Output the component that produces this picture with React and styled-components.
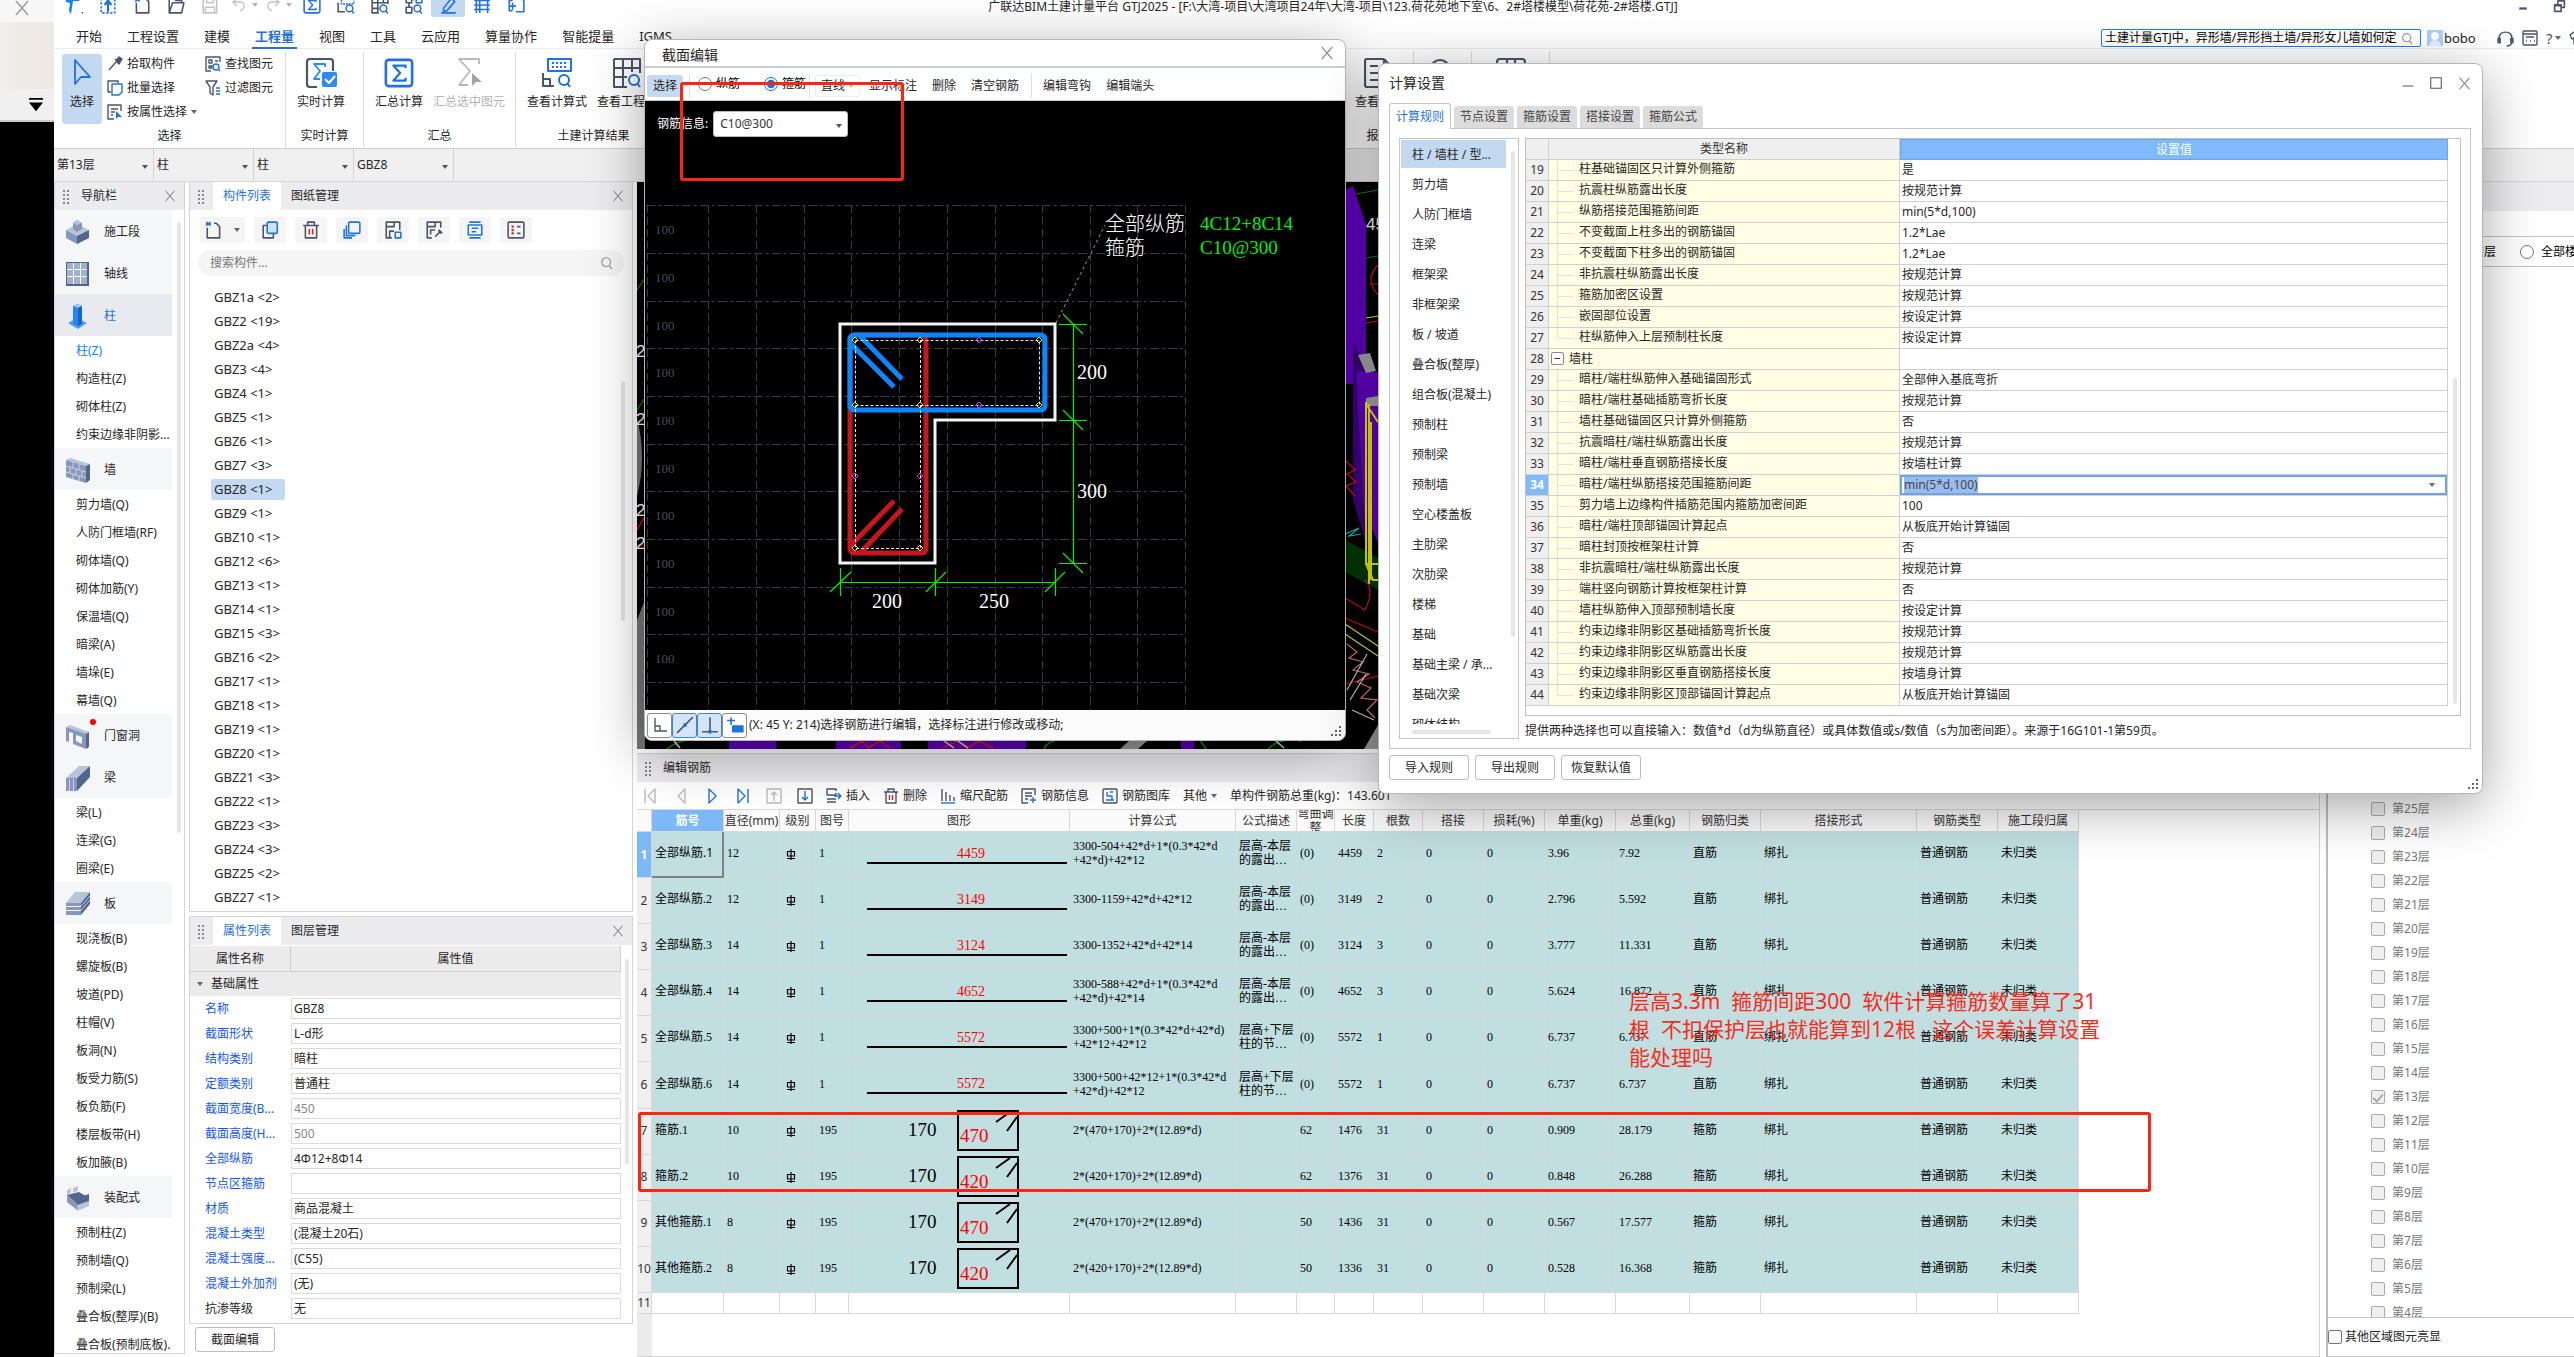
import React from 'react'
import styled, { createGlobalStyle, css } from 'styled-components'

const navGroups = [
  { name: '施工段', icon: 'stage', items: [] },
  { name: '轴线', icon: 'axis', items: [] },
  { name: '柱', icon: 'column', active: true, items: ['柱(Z)', '构造柱(Z)', '砌体柱(Z)', '约束边缘非阴影...'] },
  {
    name: '墙',
    icon: 'wall',
    items: ['剪力墙(Q)', '人防门框墙(RF)', '砌体墙(Q)', '砌体加筋(Y)', '保温墙(Q)', '暗梁(A)', '墙垛(E)', '幕墙(Q)'],
  },
  { name: '门窗洞', icon: 'door', dot: true, items: [] },
  { name: '梁', icon: 'beam', items: ['梁(L)', '连梁(G)', '圈梁(E)'] },
  {
    name: '板',
    icon: 'slab',
    items: ['现浇板(B)', '螺旋板(B)', '坡道(PD)', '柱帽(V)', '板洞(N)', '板受力筋(S)', '板负筋(F)', '楼层板带(H)', '板加腋(B)'],
  },
  { name: '装配式', icon: 'prefab', items: ['预制柱(Z)', '预制墙(Q)', '预制梁(L)', '叠合板(整厚)(B)', '叠合板(预制底板).'] },
]

const components = [
  'GBZ1a <2>', 'GBZ2 <19>', 'GBZ2a <4>', 'GBZ3 <4>', 'GBZ4 <1>', 'GBZ5 <1>', 'GBZ6 <1>', 'GBZ7 <3>', 'GBZ8 <1>',
  'GBZ9 <1>', 'GBZ10 <1>', 'GBZ12 <6>', 'GBZ13 <1>', 'GBZ14 <1>', 'GBZ15 <3>', 'GBZ16 <2>', 'GBZ17 <1>',
  'GBZ18 <1>', 'GBZ19 <1>', 'GBZ20 <1>', 'GBZ21 <3>', 'GBZ22 <1>', 'GBZ23 <3>', 'GBZ24 <3>', 'GBZ25 <2>', 'GBZ27 <1>',
]

const properties = [
  ['名称', 'GBZ8'],
  ['截面形状', 'L-d形'],
  ['结构类别', '暗柱'],
  ['定额类别', '普通柱'],
  ['截面宽度(B...', '450', 'dim'],
  ['截面高度(H...', '500', 'dim'],
  ['全部纵筋', '4Φ12+8Φ14'],
  ['节点区箍筋', ''],
  ['材质', '商品混凝土'],
  ['混凝土类型', '(混凝土20石)'],
  ['混凝土强度...', '(C55)'],
  ['混凝土外加剂', '(无)'],
  ['抗渗等级', '无', 'plain'],
]

const ruleTypes = [
  '柱 / 墙柱 / 型...', '剪力墙', '人防门框墙', '连梁', '框架梁', '非框架梁', '板 / 坡道', '叠合板(整厚)', '组合板(混凝土)',
  '预制柱', '预制梁', '预制墙', '空心楼盖板', '主肋梁', '次肋梁', '楼梯', '基础', '基础主梁 / 承...', '基础次梁', '砌体结构',
]

const rules = [
  [19, '柱基础锚固区只计算外侧箍筋', '是'],
  [20, '抗震柱纵筋露出长度', '按规范计算'],
  [21, '纵筋搭接范围箍筋间距', 'min(5*d,100)'],
  [22, '不变截面上柱多出的钢筋锚固', '1.2*Lae'],
  [23, '不变截面下柱多出的钢筋锚固', '1.2*Lae'],
  [24, '非抗震柱纵筋露出长度', '按规范计算'],
  [25, '箍筋加密区设置', '按规范计算'],
  [26, '嵌固部位设置', '按设定计算'],
  [27, '柱纵筋伸入上层预制柱长度', '按设定计算'],
  [28, '墙柱', ''],
  [29, '暗柱/端柱纵筋伸入基础锚固形式', '全部伸入基底弯折'],
  [30, '暗柱/端柱基础插筋弯折长度', '按规范计算'],
  [31, '墙柱基础锚固区只计算外侧箍筋', '否'],
  [32, '抗震暗柱/端柱纵筋露出长度', '按规范计算'],
  [33, '暗柱/端柱垂直钢筋搭接长度', '按墙柱计算'],
  [34, '暗柱/端柱纵筋搭接范围箍筋间距', 'min(5*d,100)'],
  [35, '剪力墙上边缘构件插筋范围内箍筋加密间距', '100'],
  [36, '暗柱/端柱顶部锚固计算起点', '从板底开始计算锚固'],
  [37, '暗柱封顶按框架柱计算', '否'],
  [38, '非抗震暗柱/端柱纵筋露出长度', '按规范计算'],
  [39, '端柱竖向钢筋计算按框架柱计算', '否'],
  [40, '墙柱纵筋伸入顶部预制墙长度', '按设定计算'],
  [41, '约束边缘非阴影区基础插筋弯折长度', '按规范计算'],
  [42, '约束边缘非阴影区纵筋露出长度', '按规范计算'],
  [43, '约束边缘非阴影区垂直钢筋搭接长度', '按墙身计算'],
  [44, '约束边缘非阴影区顶部锚固计算起点', '从板底开始计算锚固'],
]

const rebarColumns = [
  ['筋号', 72], ['直径(mm)', 56], ['级别', 36], ['图号', 33], ['图形', 221], ['计算公式', 166], ['公式描述', 61],
  ['弯曲调整', 38], ['长度', 39], ['根数', 49], ['搭接', 61], ['损耗(%)', 61], ['单重(kg)', 71], ['总重(kg)', 74],
  ['钢筋归类', 71], ['搭接形式', 156], ['钢筋类型', 81], ['施工段归属', 81],
]

// name, diameter, figure no., formula, description, bend, length, count, unit weight, total weight, hoop height
const rebars = [
  ['全部纵筋.1', 12, 1, '3300-504+42*d+1*(0.3*42*d\n+42*d)+42*12', '层高-本层\n的露出…', '(0)', 4459, 2, '3.96', '7.92'],
  ['全部纵筋.2', 12, 1, '3300-1159+42*d+42*12', '层高-本层\n的露出…', '(0)', 3149, 2, '2.796', '5.592'],
  ['全部纵筋.3', 14, 1, '3300-1352+42*d+42*14', '层高-本层\n的露出…', '(0)', 3124, 3, '3.777', '11.331'],
  ['全部纵筋.4', 14, 1, '3300-588+42*d+1*(0.3*42*d\n+42*d)+42*14', '层高-本层\n的露出…', '(0)', 4652, 3, '5.624', '16.872'],
  ['全部纵筋.5', 14, 1, '3300+500+1*(0.3*42*d+42*d)\n+42*12+42*12', '层高+下层\n柱的节…', '(0)', 5572, 1, '6.737', '6.737'],
  ['全部纵筋.6', 14, 1, '3300+500+42*12+1*(0.3*42*d\n+42*d)+42*12', '层高+下层\n柱的节…', '(0)', 5572, 1, '6.737', '6.737'],
  ['箍筋.1', 10, 195, '2*(470+170)+2*(12.89*d)', '', '62', 1476, 31, '0.909', '28.179', 470],
  ['箍筋.2', 10, 195, '2*(420+170)+2*(12.89*d)', '', '62', 1376, 31, '0.848', '26.288', 420],
  ['其他箍筋.1', 8, 195, '2*(470+170)+2*(12.89*d)', '', '50', 1436, 31, '0.567', '17.577', 470],
  ['其他箍筋.2', 8, 195, '2*(420+170)+2*(12.89*d)', '', '50', 1336, 31, '0.528', '16.368', 420],
]

const floors = Array.from({ length: 22 }, (_, i) => 25 - i)

const BLUE = '#1f72e0'
const INK = '#4d5468'

/* ---------- icons ---------- */

const Ico = ({ size = 16, h, box, color = INK, sw = 1.4, children }) => (
  <svg
    width={size}
    height={h || size}
    viewBox={box || '0 0 16 16'}
    fill='none'
    stroke={color}
    strokeWidth={sw}
    strokeLinejoin='round'
    aria-hidden='true'
  >
    {children}
  </svg>
)

const Sigma = ({ size = 16, color = BLUE }) => (
  <Ico size={size} color={color}>
    <rect x='1' y='1' width='14' height='14' rx='1.5' />
    <path d='M11.5 5.5V4H5l3.6 4L5 12h6.5v-1.5' strokeWidth='1.2' />
  </Ico>
)

const Lens = ({ color = '#999', size = 14 }) => (
  <Ico size={size} color={color}>
    <circle cx='7' cy='7' r='5' />
    <path d='M10.5 11l3 4' />
  </Ico>
)

const Close = ({ size = 12, color = '#888' }) => (
  <Ico size={size} color={color}>
    <path d='M2 1l12 14M14 1L2 15' />
  </Ico>
)

const SizeGrip = () => (
  <GripCorner>
    <Ico size={10} box='0 0 10 10' color='none'>
      <path d='M8 0h2v2H8zM8 4h2v2H8zM4 4h2v2H4zM8 8h2v2H8zM4 8h2v2H4zM0 8h2v2H0z' fill='#666' />
    </Ico>
  </GripCorner>
)

const quickIcons = {
  logo: (
    <Ico size={20} box='0 0 20 20' color='none'>
      <path d='M1 2h17l-3 4H9l-2 13-2-3 1-8-4-1z' fill='#1683f0' />
      <path d='M17 17h2v2z' fill='#555' />
    </Ico>
  ),
  upload: (
    <Ico size={18} color={BLUE}>
      <rect x='2' y='1' width='12' height='14' strokeDasharray='2 1.5' />
      <path d='M8 14V5M5 8l3-4 3 4' strokeWidth='2' />
    </Ico>
  ),
  fresh: (
    <Ico size={18}>
      <path d='M3 6v9h11V5l-3-3H8' />
      <path d='M2 1l4 4M6 1L2 5' stroke={BLUE} />
    </Ico>
  ),
  open: (
    <Ico size={18}>
      <path d='M2 15V2h4l2 2h5v2M2 15l3-9h10l-2 9z' />
    </Ico>
  ),
  save: (
    <Ico size={18} color='#c4c4c4'>
      <path d='M2 2h10l2 2v11H2zM5 2v4h6V2M4 15v-5h8v5' />
    </Ico>
  ),
  undo: (
    <Ico size={16} color='#c4c4c4'>
      <path d='M6 2L2 5l4 4M2 5h7c6 0 5 7 0 9' />
    </Ico>
  ),
  redo: (
    <Ico size={16} color='#c4c4c4'>
      <path d='M10 2l4 3-4 4M14 5H7C1 5 2 12 7 14' />
    </Ico>
  ),
  look: (
    <Ico size={18}>
      <rect x='4' y='1' width='11' height='6' stroke={BLUE} strokeDasharray='1.5 1' />
      <path d='M1 6v4M1 9v5h6' />
      <circle cx='11' cy='11' r='3' stroke={BLUE} />
      <path d='M13 13l2 2.5' stroke={BLUE} />
    </Ico>
  ),
  grid: (
    <Ico size={18}>
      <path d='M1 1h14v6M1 1v14h6M1 6h14M1 11h6M6 1v14M11 1v5' />
      <circle cx='11' cy='11' r='3' stroke={BLUE} />
      <path d='M13 13l2 2.5' stroke={BLUE} />
    </Ico>
  ),
  report: (
    <Ico size={18}>
      <path d='M1 1h5v5H1zM1 10h5v5H1zM6 3h3M3.5 6v4' />
      <path d='M10 1h5v5h-5z' stroke={BLUE} />
      <circle cx='11' cy='11' r='3' stroke={BLUE} />
      <path d='M13 13l2 2.5' stroke={BLUE} />
    </Ico>
  ),
  pen: (
    <Ico size={18} color={BLUE}>
      <path d='M4 11L11 2l3 3-7 8-3 .5zM2 15h13' />
    </Ico>
  ),
  rails: (
    <Ico size={18} color={BLUE}>
      <path d='M3 1v14M13 1v14M1 4h14M1 8h14M1 12h14M6 1v14' />
    </Ico>
  ),
  sheet: (
    <Ico size={18} color={BLUE}>
      <path d='M5 4H2v9h3M8 1h4l3 3v10H8M8 9H2M5 6v6' />
    </Ico>
  ),
}

const ribbonIcons = {
  arrow: (
    <Ico size={30} box='0 0 30 30' color={BLUE} sw={1.8}>
      <path d='M8 2v24l6-7h9z' />
    </Ico>
  ),
  live: (
    <Ico size={34} h={30} box='0 0 34 30' sw={2.2}>
      <path d='M13 29H6q-3 0-3-3V4q0-3 3-3h20q3 0 3 3v9' />
      <path d='M21 9V6h-11l6 7-6 8h6' stroke='#2b8af7' strokeWidth='1.8' />
      <rect x='18' y='14' width='15' height='15' rx='2' fill='#2b8af7' stroke='none' />
      <path d='M21 21l4 4 6-7' stroke='#fff' />
    </Ico>
  ),
  sum: <Sigma size={30} />,
  sumPick: (
    <Ico size={30} box='0 0 30 30' color='#b9b9b9' sw={1.8}>
      <path d='M25 6V1H5l11 12L5 27h9' />
      <path d='M18 15v13l4-4h6z' fill='#a4a4a4' stroke='none' />
    </Ico>
  ),
  formula: (
    <Ico size={30} box='0 0 30 30' color={BLUE} sw={2}>
      <path d='M6 1h23v12H6z' />
      <path d='M10 5h2M14 5h2M18 5h2M22 5h2M10 9h2M14 9h2M18 9h2M22 9h2' />
      <path d='M1 15v13h11M1 21h7v7' stroke={INK} />
      <circle cx='22' cy='22' r='5' />
      <path d='M25 25l3 4' />
    </Ico>
  ),
  qty: (
    <Ico size={30} box='0 0 30 30' sw={2}>
      <path d='M2 1h26v14M2 1v28h13M2 10h26M2 19h13M11 1v28M20 1v13' />
      <circle cx='22' cy='22' r='5' stroke={BLUE} />
      <path d='M25 25l3 4' stroke={BLUE} />
    </Ico>
  ),
  report: (
    <Ico size={30} box='0 0 30 30' sw={2.2}>
      <path d='M20 1H3q-2 0-2 2v24q0 2 2 2h20M20 1l8 9v10M20 1v9h8M6 8h8M6 15h12M6 22h8' />
    </Ico>
  ),
  ring: (
    <Ico size={30} box='0 0 30 30' sw={2.2}>
      <circle cx='15' cy='11' r='9' />
    </Ico>
  ),
  table: (
    <Ico size={30} box='0 0 30 30' sw={2.2}>
      <rect x='1' y='1' width='28' height='28' rx='3' />
      <path d='M11 1v28M19 1v28' />
    </Ico>
  ),
}

const smallIcons = {
  pick: (
    <Ico>
      <path d='M2 14l7-8' />
      <path d='M8 3l5 5M9 5l3-4 3 2-3 5z' fill={INK} />
    </Ico>
  ),
  batch: (
    <Ico>
      <path d='M11 3V1H1v11h3' />
      <path d='M5 4h10v8l-3 3H5z' stroke={BLUE} />
    </Ico>
  ),
  byProp: (
    <Ico>
      <path d='M14 7V1H1v14h6M4 5h7M4 8h4M4 11h2' />
      <path d='M9 7v8l2-2h4z' fill={BLUE} stroke='none' />
    </Ico>
  ),
  find: (
    <Ico>
      <path d='M15 6V1H1v14h5M4 4h3v3H4zM10 5h3M4 10h3v2H4z' />
      <circle cx='11' cy='11' r='3' stroke={BLUE} />
      <path d='M13 13l2 2' stroke={BLUE} />
    </Ico>
  ),
  filter: (
    <Ico>
      <path d='M1 1h11L8 7v8l-3-2V7z' />
      <path d='M11 8h4M11 11h4M11 14h4' stroke={BLUE} />
    </Ico>
  ),
}

const listTools = [
  <Ico key='a' size={18}>
    <path d='M2 6v9h11V5l-3-3H8' />
    <path d='M1 1l4 3M5 1L1 4M1 2.5h4' stroke={BLUE} />
  </Ico>,
  <Ico key='b' size={18} color={BLUE}>
    <path d='M11 11v4H2V4h3' stroke={INK} />
    <rect x='5.5' y='1' width='9' height='10' rx='1' fill='#cfe2fb' />
  </Ico>,
  <Ico key='c' size={18}>
    <path d='M1 4h14M5 4V1h6v3M3 4v11h10V4' />
    <path d='M6.5 7v5M9.5 7v5' stroke='#d8232a' />
  </Ico>,
  <Ico key='d' size={18} color={BLUE}>
    <rect x='5' y='1' width='10' height='10' rx='1' />
    <path d='M3 4v9h8M1 7v8h7' />
  </Ico>,
  <Ico key='e' size={18}>
    <path d='M14 8V1H2v14h5M2 5h7V1M5 15V9h4' />
    <rect x='10' y='10' width='5' height='5' stroke={BLUE} />
  </Ico>,
  <Ico key='f' size={18}>
    <path d='M14 6V1H2v14h4M2 5h7V1M5 12V8h4M9 14l5-5' />
    <path d='M12 8l3 3' strokeWidth='2' />
  </Ico>,
  <Ico key='g' size={18} color={BLUE}>
    <path d='M3 1h10M3 15h10' />
    <rect x='2' y='3.5' width='12' height='9' />
    <path d='M5 6.5h6M5 9.5h4' />
  </Ico>,
  <Ico key='h' size={18}>
    <rect x='1' y='1' width='14' height='14' rx='1' />
    <path d='M4 5h2M4 8h2M4 11h2' stroke='#e0222a' strokeWidth='2' />
    <path d='M9 5h3M9 11h3' />
  </Ico>,
]

const LIGHT = '#b9c4d9'
const MID = '#8796bb'
const DARK = '#526590'

const navIcons = {
  stage: (
    <>
      <path d='M1 11l11-6 12 6-12 6z' fill={LIGHT} />
      <path d='M1 11l11 6v8L1 19z' fill={MID} />
      <path d='M24 11l-12 6v8l12-6z' fill={DARK} />
      <path d='M8 4l4-3 5 3v6l-5 3-4-3z' fill={MID} />
      <path d='M8 4l4-3 5 3-5 2z' fill={LIGHT} />
    </>
  ),
  axis: (
    <>
      <rect x='1' y='1' width='23' height='24' fill={DARK} />
      <path d='M2 2h20v21H2z' fill='#fff' />
      <path d='M2 2h6v6H2zM9 2h6v6H9zM16 2h6v6h-6zM2 9h6v6H2zM9 9h6v6H9zM16 9h6v6h-6zM2 16h6v7H2zM9 16h6v7H9zM16 16h6v7h-6z' fill='#a3b0cb' />
    </>
  ),
  column: (
    <>
      <path d='M3 20l9-5 10 5-9 6z' fill='#4f9bf0' />
      <path d='M8 3l5-2 4 2v18l-4 2-5-2z' fill='#2b84ee' />
      <path d='M8 3l5-2 4 2-4 2z' fill='#9cc8fa' />
      <path d='M13 5l4-2v18l-4 2z' fill='#1266cc' />
    </>
  ),
  wall: (
    <>
      <path d='M1 3l4-2 20 6-4 2z' fill={LIGHT} />
      <path d='M21 9l4-2v16l-4 3z' fill={DARK} />
      <path d='M1 3l20 6v17L1 20z' fill={MID} />
      <path d='M1 9l20 6M1 15l20 6M8 5v6M14 7v6M5 10v6M11 12v6M17 14v6M8 17v5M14 19v5' stroke='#c9d2e4' strokeWidth='1' />
    </>
  ),
  door: (
    <>
      <path d='M1 4l4-2 19 7-3 2z' fill={LIGHT} />
      <path d='M21 11l3-2v15l-3 2z' fill={DARK} />
      <path fillRule='evenodd' d='M1 4l20 7v15L8 21V10l-4-1v10l-3-1zM11 12v6l6 3v-7z' fill={MID} />
    </>
  ),
  beam: (
    <>
      <path d='M1 13L14 1h11L12 13z' fill={LIGHT} />
      <path d='M12 13L25 1v11L12 26z' fill={DARK} />
      <path d='M1 13h11v13H1z' fill={MID} />
      <path d='M4.5 14v12M8.5 14v12' stroke='#c9d2e4' strokeWidth='1' />
    </>
  ),
  slab: (
    <>
      <path d='M1 12L10 1h15L16 12z' fill={LIGHT} />
      <path d='M16 12l9-11v12l-9 11z' fill={DARK} />
      <path d='M1 12h15v3H1zM1 16h15v3H1zM1 20h15v4H1z' fill={MID} />
      <path d='M16 15.5L25 5M16 19.5L25 9' stroke='#c9d2e4' strokeWidth='1' />
    </>
  ),
  prefab: (
    <>
      <path d='M2 5l4-2v5L2 10zM8 3l5-2v5L8 8z' fill={LIGHT} />
      <path d='M2 10l12-3 10 6-12 6z' fill={DARK} />
      <path d='M2 10l10 9v6L2 17z' fill={MID} />
      <path d='M12 19l12-3v5l-12 5z' fill={LIGHT} />
      <path d='M12 13l12-4v7l-12 4z' fill={DARK} />
    </>
  ),
}

const Grade = () => (
  <Ico size={10} h={11} box='0 0 10 11' color='#000' sw={1.2}>
    <path d='M1.5 2.5h7v4.5h-7zM5 0v11M1 9.5h8' />
  </Ico>
)

/* ---------- ribbon ---------- */

function Header() {
  return (
    <header>
      <TitleBar>
        <QuickTools>
          <QuickButton aria-label='广联达'>{quickIcons.logo}</QuickButton>
          <QuickButton aria-label='上传'>{quickIcons.upload}</QuickButton>
          <QuickButton aria-label='新建'>{quickIcons.fresh}</QuickButton>
          <QuickButton aria-label='打开'>{quickIcons.open}</QuickButton>
          <QuickButton aria-label='保存'>{quickIcons.save}</QuickButton>
          <QuickButton aria-label='撤销'>{quickIcons.undo}<Caret $light /></QuickButton>
          <QuickButton aria-label='恢复'>{quickIcons.redo}<Caret $light /></QuickButton>
          <QuickButton aria-label='汇总计算'><Sigma size={18} /></QuickButton>
          <QuickButton aria-label='查看计算式'>{quickIcons.look}</QuickButton>
          <QuickButton aria-label='查看工程量'>{quickIcons.grid}</QuickButton>
          <QuickButton aria-label='查看报表'>{quickIcons.report}</QuickButton>
          <QuickButton aria-label='编辑钢筋' $active>{quickIcons.pen}</QuickButton>
          <QuickButton aria-label='钢筋三维'>{quickIcons.rails}</QuickButton>
          <QuickButton aria-label='导入'>{quickIcons.sheet}</QuickButton>
          <QuickMore aria-label='更多'><Caret /></QuickMore>
        </QuickTools>
        <Title>广联达BIM土建计量平台 GTJ2025 - [F:\大湾-项目\大湾项目24年\大湾-项目\123.荷花苑地下室\6、2#塔楼模型\荷花苑-2#塔楼.GTJ]</Title>
        <WindowTools>
          <IconButton aria-label='最小化'>
            <Ico size={12}><path d='M3 10h10' strokeWidth='3' /></Ico>
          </IconButton>
          <IconButton aria-label='还原'>
            <Ico size={13}><path d='M6 5V1h8v8h-3M2 6h8v8H2zM2 7h8' strokeWidth='2' /></Ico>
          </IconButton>
        </WindowTools>
      </TitleBar>
      <TabBar>
        {['开始', '工程设置', '建模', '工程量', '视图', '工具', '云应用', '算量协作', '智能提量', 'IGMS'].map((tab) => (
          <MenuTab key={tab} $active={tab === '工程量'}>{tab}</MenuTab>
        ))}
        <Account>
          <HelpSearch>
            <input aria-label='搜索帮助' defaultValue='土建计量GTJ中，异形墙/异形挡土墙/异形女儿墙如何定' />
            <Lens size={13} />
          </HelpSearch>
          <Ico size={16} color='none'>
            <rect width='16' height='16' fill='#a9d1fb' />
            <circle cx='8' cy='6' r='4' fill='#fff' />
            <path d='M2 16q1-6 6-6t6 6z' fill='#e6f2ff' />
          </Ico>
          <User>bobo</User>
          <HelpTools>
            <Ico size={17}><path d='M2 11V8q0-6 6-6t6 6v3M1 8h2v4H1zM13 8h2v4h-2zM14 12q-1 3-5 3' /></Ico>
            <Ico size={16}><rect x='1' y='1' width='14' height='14' rx='1' /><path d='M1 4h14M4 7h8M4 11h1M8 11h1M12 11h1' /></Ico>
            <span>?<Caret /></span>
            <Ico size={16}><path d='M5 2L1 5l2 4 2-1v6h7V8l2 1 2-4-4-3z' /></Ico>
          </HelpTools>
        </Account>
      </TabBar>
      <Ribbon>
        <Group $w={232}>
          <GroupBody $tight>
            <BigButton $active $w={40}>{ribbonIcons.arrow}选择</BigButton>
            <SmallColumn $w={98}>
              <SmallButton>{smallIcons.pick}拾取构件</SmallButton>
              <SmallButton>{smallIcons.batch}批量选择</SmallButton>
              <SmallButton>{smallIcons.byProp}按属性选择<Caret /></SmallButton>
            </SmallColumn>
            <SmallColumn>
              <SmallButton>{smallIcons.find}查找图元</SmallButton>
              <SmallButton>{smallIcons.filter}过滤图元</SmallButton>
            </SmallColumn>
          </GroupBody>
          <GroupLabel>选择</GroupLabel>
        </Group>
        <Group $w={78}>
          <GroupBody><BigButton>{ribbonIcons.live}实时计算</BigButton></GroupBody>
          <GroupLabel>实时计算</GroupLabel>
        </Group>
        <Group $w={152}>
          <GroupBody>
            <BigButton>{ribbonIcons.sum}汇总计算</BigButton>
            <BigButton disabled>{ribbonIcons.sumPick}汇总选中图元</BigButton>
          </GroupBody>
          <GroupLabel>汇总</GroupLabel>
        </Group>
        <Group $w={156} $open>
          <GroupBody>
            <BigButton>{ribbonIcons.formula}查看计算式</BigButton>
            <BigButton>{ribbonIcons.qty}查看工程量</BigButton>
          </GroupBody>
          <GroupLabel>土建计算结果</GroupLabel>
        </Group>
        <Group $w={672} $open />
        <Group $w={70}>
          <GroupBody><BigButton>{ribbonIcons.report}查看报表</BigButton></GroupBody>
          <GroupLabel>报表</GroupLabel>
        </Group>
        <Group $w={58}><GroupBody><BigButton aria-label='指标'>{ribbonIcons.ring}</BigButton></GroupBody></Group>
        <Group $w={78}><GroupBody $center><BigButton aria-label='表格算量'>{ribbonIcons.table}</BigButton></GroupBody></Group>
      </Ribbon>
      <ContextBar>
        {['第13层', '柱', '柱', 'GBZ8'].map((value, i) => (
          <Combo key={i}>
            <select aria-label={['楼层', '构件类别', '构件类型', '构件'][i]} defaultValue={value}>
              <option>{value}</option>
            </select>
          </Combo>
        ))}
      </ContextBar>
    </header>
  )
}

/* ---------- side panels ---------- */

function NavPanel() {
  return (
    <NavBox>
      <PanelHeader>
        <Grip />
        <PanelName>导航栏</PanelName>
        <IconButton aria-label='关闭导航栏'><Close /></IconButton>
      </PanelHeader>
      <NavScroll>
        {navGroups.map((group) => (
          <div key={group.name}>
            <NavHead $active={group.active}>
              <Ico size={26} box='0 0 26 26' color='none'>{navIcons[group.icon]}</Ico>
              {group.name}
              {group.dot && <RedDot />}
            </NavHead>
            {group.items.map((item) => (
              <NavItem key={item} $active={item === '柱(Z)'}>{item}</NavItem>
            ))}
          </div>
        ))}
        <Thumb $top={12} $h={611} $right={3} />
      </NavScroll>
    </NavBox>
  )
}

function ComponentPanel() {
  return (
    <ListBox>
      <PanelHeader>
        <Grip />
        <PanelTab $active>构件列表</PanelTab>
        <PanelTab>图纸管理</PanelTab>
        <IconButton aria-label='关闭构件列表'><Close /></IconButton>
      </PanelHeader>
      <ListTools>
        {listTools.map((icon, i) => (
          <ToolButton key={i} $split={i === 0} aria-label={['新建', '复制', '删除', '层间复制', '存档', '提取', '排序', '显示'][i]}>
            {icon}
            {i === 0 && <Caret />}
          </ToolButton>
        ))}
      </ListTools>
      <SearchBox>
        <input aria-label='搜索构件' placeholder='搜索构件...' />
        <Lens />
      </SearchBox>
      <ComponentList>
        {components.map((name) => (
          <li key={name}>
            <ComponentItem $active={name === 'GBZ8 <1>'}>{name}</ComponentItem>
          </li>
        ))}
      </ComponentList>
      <Thumb $top={199} $h={240} $right={7} />
    </ListBox>
  )
}

function PropertyPanel() {
  return (
    <PropertyBox>
      <PanelHeader>
        <Grip />
        <PanelTab $active>属性列表</PanelTab>
        <PanelTab>图层管理</PanelTab>
        <IconButton aria-label='关闭属性列表'><Close /></IconButton>
      </PanelHeader>
      <PropertyHead>
        <span>属性名称</span>
        <span>属性值</span>
      </PropertyHead>
      <PropertySection><Caret />基础属性</PropertySection>
      <PropertyRows>
        {properties.map(([label, value, kind]) => (
          <PropertyRow key={label} $kind={kind}>
            <label htmlFor={`prop-${label}`}>{label}</label>
            <input id={`prop-${label}`} defaultValue={value} />
          </PropertyRow>
        ))}
      </PropertyRows>
      <Thumb $top={42} $h={205} $right={3} />
    </PropertyBox>
  )
}

function FloorPanel() {
  return (
    <FloorBox>
      <FloorHeader />
      <FloorFilter>
        <label><input type='radio' name='floor' />当前楼层</label>
        <label><input type='radio' name='floor' />全部楼层</label>
      </FloorFilter>
      <FloorList>
        {floors.map((n) => (
          <label key={n}>
            <input type='checkbox' disabled defaultChecked={n === 13} />第{n}层
          </label>
        ))}
      </FloorList>
      <FloorFoot>
        <label><input type='checkbox' />其他区域图元亮显</label>
      </FloorFoot>
    </FloorBox>
  )
}

/* ---------- 3D view and bar table ---------- */

function ModelView() {
  return (
    <Viewport>
      <svg width='1683' height='567' viewBox='637 182 1683 567' aria-hidden='true'>
        <rect x='637' y='182' width='1683' height='567' fill='#000' />
        <path d='M637 418q10 40 0 78zM637 620l8-20v150h-8z' fill='#777' />
        <path d='M1345 190l8-4 13 38v160h-21z' fill='#6600cc' />
        <path d='M1353 340l13 30 5 190-18-60z' fill='#420083' />
        <path d='M1356 372h22v170l-14-30z' fill='#6600cc' />
        <path d='M1358 355l12-2 6 18-10 2zM1366 398l12-2v10h-12z' fill='#aaa' />
        <path d='M1345 540l33 18v32l-33-18z' fill='#043d04' />
        <g fill='none' strokeWidth='1.2'>
          <path d='M1366 402v162l7 16h5M1369 404v180M1366 404l12 18M1371 422v158M1367 564h11' stroke='#f2f20a' strokeWidth='2' />
          <path d='M1356 194l22-4M1366 258l12-2M637 290l8-12M637 410l8-12' stroke='#0b8a0b' />
          <path d='M1378 265q-14 14 0 30M1370 284h8' stroke='#e01414' />
          <path d='M1366 318l12-2M1345 624l33 22M1345 634l33 22' stroke='#f2f20a' />
          <path d='M1366 323l12-2M1345 460l10 10-8 4 9 8-10 4 9 10M1345 598l20 12q10-20 0-30M1345 618l33 14M1345 684l33-8' stroke='#e01414' />
          <path d='M1345 534l14-6-10 8 12-2' stroke='#00d5d5' />
          <path d='M1347 644l10 8-8 6 14 4-10 8 16 4-12 8 14 6-10 10 16 2-10 10 8 8' stroke='#f08080' />
          <path d='M1350 700l16-26M1347 690l20-36M1352 710l22 10' stroke='#ddd' />
          <path d='M637 530l8-14M637 545h8' stroke='#e01414' />
        </g>
        <path d='M729 740h47v9h-47zM836 740h65v9h-65zM928 740h98v9h-98zM1181 740h13v9h-13z' fill='#5b00b8' />
        <path d='M1120 749l10-9h18l-10 9zM1364 749l14-24v24z' fill='#999' />
        <g fill='none' strokeWidth='1.5'>
          <path d='M667 749q10-8 22-9M1044 749q4-9 16-9M1200 740l6 9M1268 749q12-12 34-8' stroke='#0b8a0b' />
          <path d='M850 748l12-7 6 7 12-7 10 7M943 748l14-7 10 7 12-7 14 7' stroke='#e01414' />
          <path d='M944 741l10 7M958 741l10 7M674 741l6 7M1276 741l8 7' stroke='#ddd' />
        </g>
        <g fill='#fff' fontFamily='Liberation Sans' fontSize='17'>
          <text x='636' y='357'>2</text>
          <text x='636' y='425'>2</text>
          <text x='636' y='516'>2</text>
          <text x='636' y='549'>2</text>
          <text x='1366' y='230'>45</text>
        </g>
      </svg>
    </Viewport>
  )
}

const BarShape = ({ length, hoop }) =>
  hoop ? (
    <svg width='220' height='44' viewBox='0 0 220 44'>
      <rect x='109' y='2' width='60' height='39' fill='none' stroke='#000' strokeWidth='2' />
      <path d='M147 13l14-10M158 22l10-14' stroke='#000' strokeWidth='2' />
      <text x='59' y='27' fontSize='19'>170</text>
      <text x='111' y='33' fontSize='19' fill='#f00'>{hoop}</text>
    </svg>
  ) : (
    <svg width='220' height='44' viewBox='0 0 220 44'>
      <path d='M18 30h200' stroke='#000' strokeWidth='2' />
      <text x='108' y='25' fontSize='14' fill='#f00'>{length}</text>
    </svg>
  )

function RebarPanel() {
  return (
    <RebarBox>
      <PanelHeader>
        <Grip />
        <PanelName>编辑钢筋</PanelName>
      </PanelHeader>
      <RebarTools>
        <StepButtons>
          <IconButton aria-label='首条'><Ico color='#bbb'><path d='M3 1v14M13 1L6 8l7 7z' /></Ico></IconButton>
          <IconButton aria-label='上一条'><Ico color='#bbb'><path d='M12 1L5 8l7 7z' /></Ico></IconButton>
          <IconButton aria-label='下一条'><Ico color={BLUE}><path d='M5 1l7 7-7 7z' /></Ico></IconButton>
          <IconButton aria-label='末条'><Ico color={BLUE}><path d='M13 1v14M3 1l7 7-7 7z' /></Ico></IconButton>
          <IconButton aria-label='上移'><Ico color='#bbb'><path d='M1 1h14v14H1zM8 13V4M5 7l3-3 3 3' /></Ico></IconButton>
          <IconButton aria-label='下移'><Ico><path d='M1 1h14v14H1z' /><path d='M8 3v9M5 9l3 3 3-3' stroke={BLUE} /></Ico></IconButton>
        </StepButtons>
        <TextTool><Ico><path d='M10 3V1H1v6h9V5M1 11h9M1 14h9' /><path d='M8 8h7M12 5l3 3-3 3' stroke={BLUE} /></Ico>插入</TextTool>
        <TextTool>{listTools[2]}删除</TextTool>
        <TextTool><Ico><path d='M2 1v12M6 4v9M10 7v6M14 9v4' /><path d='M1 15h14' stroke={BLUE} /></Ico>缩尺配筋</TextTool>
        <TextTool><Ico><path d='M14 7V1H1v14h6M4 5h7M4 8h7M4 11h3' /><path d='M9 12h6M12 9v6' stroke={BLUE} /></Ico>钢筋信息</TextTool>
        <TextTool><Ico><rect x='1' y='1' width='14' height='14' rx='1' /><path d='M4 12h8M5 8h5v4M5 4v4M8 4h3' stroke={BLUE} /></Ico>钢筋图库</TextTool>
        <TextTool>其他<Caret /></TextTool>
        <span>单构件钢筋总重(kg)：143.601</span>
      </RebarTools>
      <RebarBody>
        <RebarTable>
          <colgroup>
            <col width='15' />
            {rebarColumns.map(([name, width]) => <col key={name} width={width} />)}
          </colgroup>
          <thead>
            <tr>
              <th aria-label='序号' />
              {rebarColumns.map(([name]) => (
                <th key={name}><HeadText>{name}</HeadText></th>
              ))}
            </tr>
          </thead>
          <tbody>
            {rebars.map(([name, d, fig, formula, desc, bend, length, count, unit, total, hoop], i) => (
              <tr key={name}>
                <th>{i + 1}</th>
                <td>{name}</td>
                <td>{d}</td>
                <td className='mid'><Grade /></td>
                <td>{fig}</td>
                <td className='shape'><BarShape length={length} hoop={hoop} /></td>
                <td>{formula}</td>
                <td>{desc}</td>
                <td>{bend}</td>
                <td>{length}</td>
                <td>{count}</td>
                <td>0</td>
                <td>0</td>
                <td>{unit}</td>
                <td>{total}</td>
                <td>{hoop ? '箍筋' : '直筋'}</td>
                <td>绑扎</td>
                <td>普通钢筋</td>
                <td>未归类</td>
              </tr>
            ))}
            <tr className='blank'>
              <th>11</th>
              {rebarColumns.map(([name]) => <td key={name} />)}
            </tr>
          </tbody>
        </RebarTable>
      </RebarBody>
    </RebarBox>
  )
}

/* ---------- section editor window ---------- */

const gridX = [647, 708, 756, 804, 851, 899, 947, 995, 1042, 1090, 1137, 1185]
const gridY = [205, 253, 301, 348, 396, 444, 491, 539, 587, 634, 682]
const cornerBars = [[855, 340], [920, 340], [1039, 340], [855, 405], [920, 405], [1039, 405], [855, 548], [920, 548]]
const sideBars = [[979, 340], [979, 405], [855, 476], [920, 476]]

const Diamond = ({ at: [x, y], color }) => (
  <path d={`M${x} ${y - 3}l3 3-3 3-3-3z`} fill='none' stroke={color} />
)

function SectionDrawing() {
  return (
    <svg width='100%' height='609' viewBox='645 101 700 609' preserveAspectRatio='xMinYMin' aria-hidden='true'>
      <g stroke='#343d49' strokeDasharray='9 3 3 3'>
        {gridX.map((x) => <path key={x} d={`M${x + 0.5} 205V710`} strokeDasharray='8 4' />)}
        {gridY.map((y) => <path key={y} d={`M646 ${y + 0.5}H1185`} />)}
      </g>
      <g fill='#434d5b' fontSize='13'>
        {gridY.slice(0, 10).map((y) => <text key={y} x='655' y={y + 29}>100</text>)}
      </g>
      <path d='M1056 323L1105 225' stroke='#9a9a9a' strokeDasharray='3 3' />
      <path d='M840 324H1055V420H935V563H840z' fill='none' stroke='#f4f4f4' strokeWidth='3' />
      <rect x='850' y='335' width='76' height='218' rx='4' fill='none' stroke='#c8161d' strokeWidth='5' />
      <path d='M851 545L894 501M861 552L902 509' stroke='#c8161d' strokeWidth='5' />
      <rect x='850' y='335' width='195' height='75' rx='4' fill='none' stroke='#0a86ff' strokeWidth='5' />
      <path d='M851 344L894 387M860 336L902 379' stroke='#0a86ff' strokeWidth='5' />
      <path d='M855.5 340.5H1039.5V405.5H855.5zM920.5 340V548.5H855.5V405' fill='none' stroke='#d6e8ff' strokeDasharray='3 2' />
      {cornerBars.map((p) => <Diamond key={p.join()} at={p} color='#f5e614' />)}
      {sideBars.map((p) => <Diamond key={p.join()} at={p} color='#f01ef0' />)}
      <g stroke='#00f000' strokeWidth='1.2'>
        <path d='M1073.5 324V563M1059 324.5h28M1059 420.5h28M1059 563.5h28' />
        <path d='M1063 314l20 20M1063 410l20 20M1063 553l20 20' />
        <path d='M840 582.5H1055M840.5 568v28M935.5 568v28M1055.5 568v28' />
        <path d='M830 592l21-20M926 592l20-20M1045 592l20-20' />
      </g>
      <g fill='#fff' fontSize='20'>
        <text x='1077' y='379'>200</text>
        <text x='1077' y='498'>300</text>
        <text x='872' y='608'>200</text>
        <text x='979' y='608'>250</text>
        <g fontWeight='300'>
          <text x='1105' y='231'>全部纵筋</text>
          <text x='1105' y='255'>箍筋</text>
        </g>
      </g>
      <g fill='#00f000' fontSize='19'>
        <text x='1200' y='230'>4C12+8C14</text>
        <text x='1200' y='254'>C10@300</text>
      </g>
    </svg>
  )
}

function SectionWindow() {
  return (
    <SectionFrame role='dialog' aria-label='截面编辑'>
      <SectionTitle>
        截面编辑
        <IconButton aria-label='关闭截面编辑'><Close size={14} /></IconButton>
      </SectionTitle>
      <SectionTools>
        <FlatButton $active>选择</FlatButton>
        <Rule />
        <RadioPair>
          <label><input type='radio' name='bar' />纵筋</label>
          <label><input type='radio' name='bar' defaultChecked />箍筋</label>
        </RadioPair>
        <Rule />
        <FlatButton $boxed>直线<Caret $light /></FlatButton>
        <FlatButton>显示标注</FlatButton>
        <FlatButton>删除</FlatButton>
        <FlatButton>清空钢筋</FlatButton>
        <Rule />
        <FlatButton>编辑弯钩</FlatButton>
        <FlatButton>编辑端头</FlatButton>
      </SectionTools>
      <SectionCanvas>
        <SectionDrawing />
        <BarInfo>
          <label htmlFor='bar-info'>钢筋信息:</label>
          <Combo $box>
            <select id='bar-info'><option>C10@300</option></select>
          </Combo>
        </BarInfo>
      </SectionCanvas>
      <SectionStatus>
        <SnapButton aria-label='正交'><Ico size={16}><path d='M3 1v13h12M3 9h5v5' /></Ico></SnapButton>
        <SnapButton $on aria-label='中点'><Ico size={18}><path d='M1 15L15 1' /><circle cx='8' cy='8' r='1' stroke={BLUE} /></Ico></SnapButton>
        <SnapButton $on aria-label='垂点'><Ico size={18}><path d='M8 1v12M1 14h14' /><circle cx='8' cy='14' r='1' stroke={BLUE} /></Ico></SnapButton>
        <SnapButton aria-label='动态输入'><Ico size={18} color={BLUE}><path d='M1 4h7M4.5 1v7' /><rect x='6' y='9' width='9' height='5' fill={BLUE} /></Ico></SnapButton>
        <span>(X: 45 Y: 214)选择钢筋进行编辑，选择标注进行修改或移动;</span>
        <SizeGrip />
      </SectionStatus>
    </SectionFrame>
  )
}

/* ---------- calculation settings window ---------- */

function SettingsWindow() {
  return (
    <SettingsFrame role='dialog' aria-label='计算设置'>
      <SettingsTitle>
        <span>计算设置</span>
        <IconButton aria-label='最小化'><Ico size={12}><path d='M1 12h14' /></Ico></IconButton>
        <IconButton aria-label='最大化'><Ico size={12}><rect x='1' y='1' width='14' height='14' /></Ico></IconButton>
        <IconButton aria-label='关闭计算设置'><Close size={13} /></IconButton>
      </SettingsTitle>
      <SettingsTabs>
        {['计算规则', '节点设置', '箍筋设置', '搭接设置', '箍筋公式'].map((tab, i) => (
          <SettingsTab key={tab} $active={i === 0}>{tab}</SettingsTab>
        ))}
      </SettingsTabs>
      <SettingsPane>
        <TypeBox>
          <TypeScroll>
            {ruleTypes.map((type, i) => <TypeItem key={type} $active={i === 0}>{type}</TypeItem>)}
          </TypeScroll>
          <Thumb $top={12} $h={486} $right={3} />
          <WideThumb />
        </TypeBox>
        <RuleColumn>
          <RuleBox>
            <RuleTable>
              <colgroup>
                <col width='23' />
                <col width='351' />
                <col />
              </colgroup>
              <thead>
                <tr><th aria-label='序号' /><th>类型名称</th><th>设置值</th></tr>
              </thead>
              <tbody>
                {rules.map(([no, name, value]) => (
                  <RuleRow key={no} $current={no === 34}>
                    <th>{no}</th>
                    {no === 28 ? (
                      <td className='parent'><Fold aria-label='折叠'>−</Fold>{name}</td>
                    ) : (
                      <td><Branch $last={no === 27 || no === 44} />{name}</td>
                    )}
                    <td>
                      {no === 34 ? (
                        <Editor><mark>{value}</mark><Caret /></Editor>
                      ) : (
                        value
                      )}
                    </td>
                  </RuleRow>
                ))}
              </tbody>
            </RuleTable>
            <Thumb $top={239} $h={326} $right={3} />
          </RuleBox>
          <Hint>提供两种选择也可以直接输入：数值*d（d为纵筋直径）或具体数值或s/数值（s为加密间距）。来源于16G101-1第59页。</Hint>
        </RuleColumn>
      </SettingsPane>
      <SettingsFoot>
        <PushButton>导入规则</PushButton>
        <PushButton>导出规则</PushButton>
        <PushButton>恢复默认值</PushButton>
        <SizeGrip />
      </SettingsFoot>
    </SettingsFrame>
  )
}

export default function App() {
  return (
    <Desktop>
      <GlobalStyle />
      <BackStrip>
        <BackTop><Close size={16} color='#999' /></BackTop>
        <BackMiddle />
        <BackBar>
          <Ico size={14} color='#000'><path d='M0 1h16' strokeWidth='2' /><path d='M0 5h16L8 15z' fill='#000' stroke='none' /></Ico>
        </BackBar>
      </BackStrip>
      <Workbench>
        <Header />
        <Body>
          <NavPanel />
          <ListColumn>
            <ComponentPanel />
            <PropertyPanel />
            <ListFoot><PushButton>截面编辑</PushButton></ListFoot>
          </ListColumn>
          <Center>
            <ModelView />
            <RebarPanel />
          </Center>
          <FloorPanel />
        </Body>
      </Workbench>
      <SectionWindow />
      <SettingsWindow />
      <MarkBox $x={680} $y={82} $w={224} $h={99} />
      <MarkBox $x={638} $y={1112} $w={1513} $h={80} />
      <MarkNote>{'层高3.3m  箍筋间距300  软件计算箍筋数量算了31\n根  不扣保护层也就能算到12根   这个误差计算设置\n能处理吗'}</MarkNote>
    </Desktop>
  )
}

const GlobalStyle = createGlobalStyle`
  * {
    box-sizing: border-box;
  }
  body {
    margin: 0;
    background: #fff;
    color: #262626;
    font: 12px/20px "Noto Sans", "Noto Sans CJK SC", sans-serif;
    overflow: hidden;
  }
  button, input, select {
    font: inherit;
    color: inherit;
    margin: 0;
    padding: 0;
    border: 0;
    background: none;
  }
  button {
    white-space: nowrap;
  }
  svg {
    flex: none;
    display: block;
  }
  table {
    border-spacing: 0;
    table-layout: fixed;
  }
`
const Desktop = styled.div`
  position: relative;
  display: flex;
  height: 100vh;
  overflow: hidden;
`
const BackStrip = styled.div`
  flex: none;
  width: 54px;
  background: #000;
`
const BackTop = styled.div`
  height: 22px;
  padding-left: 14px;
  background: #f7f7f7;
`
const BackMiddle = styled.div`
  height: 67px;
  background: linear-gradient(90deg, #efefea, #efe8e4);
`
const BackBar = styled.div`
  display: flex;
  align-items: center;
  height: 33px;
  padding-left: 29px;
  background: #f0f0f0;
  border-bottom: 2px solid #c9c9c9;
`
const Workbench = styled.div`
  flex: 1;
  min-width: 0;
  display: flex;
  flex-direction: column;
`
const TitleBar = styled.div`
  display: grid;
  grid-template-columns: 1fr auto 1fr;
  height: 24px;
`
const QuickTools = styled.div`
  display: flex;
  align-items: center;
  height: 24px;
  margin-top: -7px;
  padding-left: 3px;
`
const QuickButton = styled.button`
  display: flex;
  align-items: center;
  justify-content: center;
  gap: 5px;
  width: 34px;
  height: 24px;
  ${(props) => props.$active && 'background: #c3d9f1; border-radius: 3px;'}
`
const QuickMore = styled.button`
  margin-left: 6px;
`
const Caret = styled.i`
  flex: none;
  width: 0;
  height: 0;
  border: 3px solid transparent;
  border-top: 4px solid ${(props) => (props.$light ? '#b5b5b5' : '#666')};
  border-bottom: 0;
`
const Title = styled.div`
  padding-left: 38px;
  line-height: 14px;
  white-space: nowrap;
`
const WindowTools = styled.div`
  display: flex;
  justify-content: flex-end;
  gap: 24px;
  height: 13px;
  padding-right: 8px;
`
const IconButton = styled.button`
  display: flex;
  align-items: center;
  justify-content: center;
`
const TabBar = styled.nav`
  display: flex;
  gap: 19px;
  height: 25px;
  padding-left: 19px;
  border-bottom: 1px solid #ececec;
`
const MenuTab = styled.button`
  height: 25px;
  padding: 0 3px;
  font-size: 13px;
  line-height: 25px;
  border-bottom: 2px solid transparent;
  ${(props) =>
    props.$active &&
    css`
      color: ${BLUE};
      font-weight: bold;
      border-color: ${BLUE};
    `}
`
const Account = styled.div`
  display: flex;
  align-items: center;
  width: 473px;
  height: 25px;
  margin-left: auto;
  padding-top: 3px;
  overflow: hidden;
`
const HelpSearch = styled.div`
  display: flex;
  align-items: center;
  flex: none;
  width: 320px;
  height: 18px;
  margin-right: 6px;
  padding: 0 6px 0 3px;
  border: 1px solid #0e86ee;
  border-radius: 2px;
  color: #000;
  input {
    flex: 1;
    min-width: 0;
    height: 16px;
    outline: none;
  }
`
const User = styled.span`
  width: 54px;
  padding-left: 1px;
  font-size: 13px;
`
const HelpTools = styled.div`
  display: flex;
  align-items: center;
  gap: 8px;
  width: 77px;
  color: ${INK};
  font-size: 15px;
  span {
    display: flex;
    align-items: center;
    gap: 2px;
    width: 16px;
  }
`
const Ribbon = styled.div`
  display: flex;
  height: 100px;
  border-bottom: 1px solid #cfcfcf;
`
const Group = styled.div`
  display: flex;
  flex-direction: column;
  flex: none;
  width: ${(props) => props.$w}px;
  height: 96px;
  margin-top: 2px;
  border-right: 1px solid ${(props) => (props.$open ? 'transparent' : '#dcdcdc')};
`
const GroupBody = styled.div`
  display: flex;
  gap: 10px;
  height: 75px;
  padding-left: 11px;
  ${(props) => props.$center && 'justify-content: center; padding: 0;'}
  ${(props) => props.$tight && 'padding-left: 8px; gap: 0;'}
`
const GroupLabel = styled.div`
  line-height: 24px;
  text-align: center;
`
const BigButton = styled.button`
  display: flex;
  flex-direction: column;
  align-items: center;
  gap: 2px;
  height: 70px;
  margin-top: 3px;
  padding-top: 4px;
  line-height: 24px;
  border-radius: 3px;
  ${(props) => props.$w && `width: ${props.$w}px;`}
  ${(props) => props.$active && 'background: #c3d9f1;'}
  &:disabled {
    color: #b4b4b4;
  }
`
const SmallColumn = styled.div`
  width: ${(props) => props.$w || 74}px;
  padding-left: 5px;
`
const SmallButton = styled.button`
  display: flex;
  align-items: center;
  gap: 4px;
  height: 24px;
  padding-top: 2px;
`
const ContextBar = styled.div`
  display: flex;
  height: 33px;
  background: #f0f0f0;
  border-bottom: 1px solid #d4d4d4;
`
const Combo = styled.div`
  position: relative;
  width: 100px;
  border-right: 1px solid #d4d4d4;
  select {
    width: 100%;
    height: 100%;
    padding-left: 3px;
    appearance: none;
    outline: none;
  }
  &::after {
    content: '';
    position: absolute;
    right: 5px;
    top: 50%;
    border: 3px solid transparent;
    border-top: 4px solid #555;
    border-bottom: 0;
    pointer-events: none;
  }
  ${(props) =>
    props.$box &&
    css`
      width: 135px;
      height: 26px;
      color: #333;
      background: #fff;
      border: 1px solid #bbb;
      border-radius: 3px;
      select {
        padding-left: 6px;
      }
    `}
`
const Body = styled.main`
  display: flex;
  flex: 1;
  min-height: 0;
`
const PanelHeader = styled.div`
  display: flex;
  align-items: center;
  flex: none;
  height: 28px;
  padding: 0 8px 0 7px;
  background: #ececee;
  ${IconButton} {
    margin-left: auto;
  }
`
const Grip = styled.i`
  width: 7px;
  height: 15px;
  margin-right: 12px;
  background: radial-gradient(circle, #888 1px, transparent 1px) 0 0 / 4px 4px;
`
const PanelName = styled.span`
  line-height: 28px;
`
const PanelTab = styled.button`
  height: 28px;
  padding: 0 10px;
  line-height: 28px;
  ${PanelHeader} > ${Grip} + & {
    margin-left: -3px;
  }
  ${(props) => props.$active && `background: #fff; color: ${BLUE};`}
`
const NavBox = styled.aside`
  display: flex;
  flex-direction: column;
  flex: none;
  width: 131px;
  margin-bottom: 3px;
  border: 1px solid #d4d4d4;
  border-top: 0;
`
const NavScroll = styled.div`
  position: relative;
  flex: 1;
  min-height: 0;
  padding-right: 12px;
  overflow: hidden;
`
const NavHead = styled.button`
  position: relative;
  display: flex;
  align-items: center;
  gap: 13px;
  width: 100%;
  height: 42px;
  padding: 1px 0 0 10px;
  background: ${(props) => (props.$active ? '#e8eaf0' : '#f5f6f8')};
  color: ${(props) => (props.$active ? BLUE : 'inherit')};
`
const RedDot = styled.i`
  position: absolute;
  left: 35px;
  top: 5px;
  width: 6px;
  height: 6px;
  border-radius: 50%;
  background: #f00;
`
const NavItem = styled.button`
  display: block;
  width: 100%;
  height: 28px;
  padding: 1px 0 0 21px;
  text-align: left;
  color: ${(props) => (props.$active ? '#0a84ff' : 'inherit')};
`
const Thumb = styled.i`
  position: absolute;
  top: ${(props) => props.$top}px;
  right: ${(props) => props.$right}px;
  width: 4px;
  height: ${(props) => props.$h}px;
  border-radius: 2px;
  background: #e6e6e6;
`
const ListColumn = styled.div`
  display: flex;
  flex-direction: column;
  flex: none;
  width: 444px;
  margin-left: 4px;
`
const ListBox = styled.section`
  position: relative;
  flex: 1;
  min-height: 0;
  overflow: hidden;
  border: 1px solid #d4d4d4;
  border-top: 0;
`
const ListTools = styled.div`
  display: flex;
  gap: 9px;
  padding: 7px 10px;
`
const ToolButton = styled.button`
  display: flex;
  align-items: center;
  justify-content: center;
  gap: 11px;
  width: ${(props) => (props.$split ? 45 : 32)}px;
  height: 26px;
  background: #f5f5f5;
  border-radius: 3px;
`
const SearchBox = styled.div`
  display: flex;
  align-items: center;
  height: 26px;
  margin: 0 8px;
  padding: 0 10px 0 12px;
  background: #f5f5f5;
  border-radius: 13px;
  input {
    flex: 1;
    outline: none;
  }
  input::placeholder {
    color: #777;
  }
`
const ComponentList = styled.ul`
  margin: 0;
  padding: 10px 0 0 21px;
  list-style: none;
  li {
    height: 24px;
    padding-top: 1px;
  }
`
const ComponentItem = styled.button`
  display: block;
  min-width: 74px;
  height: 21px;
  padding: 0 3px;
  font-size: 13px;
  line-height: 21px;
  text-align: left;
  border-radius: 2px;
  ${(props) => props.$active && 'background: #c3d9f1;'}
`
const PropertyBox = styled.section`
  position: relative;
  flex: none;
  height: 408px;
  margin-top: 4px;
  border: 1px solid #d4d4d4;
`
const PropertyHead = styled.div`
  display: grid;
  grid-template-columns: 101px 1fr;
  height: 26px;
  margin: 1px 11px 0 0;
  line-height: 25px;
  text-align: center;
  background: #ebebeb;
  border-bottom: 1px solid #d0d0d0;
  span {
    border-right: 1px solid #d0d0d0;
  }
`
const PropertySection = styled.div`
  display: flex;
  align-items: center;
  gap: 8px;
  height: 24px;
  margin-right: 11px;
  padding-left: 7px;
  background: #ebebeb;
`
const PropertyRows = styled.div`
  padding: 2px 11px 0 15px;
`
const PropertyRow = styled.div`
  display: grid;
  grid-template-columns: 86px 1fr;
  height: 25px;
  line-height: 21px;
  color: #1257f2;
  ${(props) => props.$kind === 'plain' && 'color: #262626;'}
  label {
    white-space: nowrap;
  }
  input {
    min-width: 0;
    height: 21px;
    padding-left: 2px;
    border: 1px solid #dadada;
    color: ${(props) => (props.$kind === 'dim' ? '#888' : '#262626')};
  }
`
const ListFoot = styled.div`
  flex: none;
  height: 33px;
  padding: 3px 6px;
`
const PushButton = styled.button`
  width: 80px;
  height: 25px;
  background: #fff;
  border: 1px solid #bdbdbd;
  border-radius: 3px;
`
const Center = styled.div`
  display: flex;
  flex-direction: column;
  flex: 1;
  min-width: 0;
  margin: 0 6px 0 4px;
`
const Viewport = styled.div`
  flex: none;
  height: 567px;
  margin-bottom: 4px;
  overflow: hidden;
  background: #000;
`
const RebarBox = styled.section`
  display: flex;
  flex-direction: column;
  flex: 1;
  min-height: 0;
  border: 1px solid #d4d4d4;
  border-left: 0;
`
const RebarTools = styled.div`
  display: flex;
  align-items: center;
  flex: none;
  gap: 13px;
  height: 28px;
  padding-left: 5px;
  border-bottom: 1px solid #d8d8d8;
`
const StepButtons = styled.div`
  display: flex;
  gap: 15px;
`
const TextTool = styled.button`
  display: flex;
  align-items: center;
  gap: 4px;
  svg {
    width: 16px;
    height: 16px;
  }
`
const RebarBody = styled.div`
  flex: 1;
  min-height: 0;
  background: linear-gradient(90deg, #ececec 15px, #fff 15px);
`
const RebarTable = styled.table`
  width: 1442px;
  height: 504px;
  color: #000;
  background: #c1dfe1;
  font-family: 'Liberation Serif', 'Noto Sans CJK SC', serif;
  line-height: 14px;
  th {
    padding: 0;
    font: 12px/14px 'Noto Sans', 'Noto Sans CJK SC', sans-serif;
    color: #333;
    background: #f0f0f0;
    border-right: 1px solid #d8d8d8;
    border-bottom: 1px solid #d8d8d8;
  }
  thead th {
    height: 22px;
    background: #fafafa;
  }
  thead th:nth-child(2),
  tbody tr:first-child th {
    color: #fff;
    font-weight: bold;
    background: #7db8f8;
  }
  tbody tr {
    height: 46px;
  }
  td {
    padding: 0 0 3px 3px;
    white-space: pre;
    border-right: 1px solid #d8d8d8;
    border-bottom: 1px solid #d8d8d8;
  }
  tr:first-child td:nth-child(2) {
    border-right: 2px solid #808080;
    border-bottom: 2px solid #808080;
    font-family: 'Noto Sans', 'Noto Sans CJK SC', sans-serif;
  }
  td.mid svg {
    margin: 3px auto 0 3px;
  }
  td.shape {
    padding: 0;
  }
  tr.blank {
    height: 21px;
    background: #fff;
  }
`
const HeadText = styled.div`
  display: flex;
  align-items: center;
  justify-content: center;
  height: 21px;
  overflow: hidden;
`
const FloorBox = styled.aside`
  display: flex;
  flex-direction: column;
  flex: none;
  width: 248px;
  border-left: 2px solid #b9bdc3;
  overflow: hidden;
  input {
    flex: none;
    width: 14px;
    height: 14px;
  }
  input[type='checkbox'] {
    appearance: none;
    display: grid;
    place-items: center;
    background: #fff;
    border: 1px solid #777;
    border-radius: 2px;
  }
  input[type='checkbox']:disabled {
    background: #efefef;
    border-color: #aaa;
  }
  input:checked::after {
    content: '';
    width: 4px;
    height: 8px;
    border: solid #aaa;
    border-width: 0 2px 2px 0;
    transform: rotate(42deg);
  }
  label {
    display: flex;
    align-items: center;
    white-space: nowrap;
  }
`
const FloorHeader = styled.div`
  height: 29px;
  background: #ededf0;
`
const FloorFilter = styled.div`
  display: flex;
  gap: 24px;
  height: 31px;
  margin-top: 25px;
  padding-left: 99px;
  color: #000;
  border: solid #c4c4c4;
  border-width: 1px 0;
  label {
    gap: 7px;
  }
`
const FloorList = styled.div`
  height: 520px;
  margin-top: auto;
  padding-left: 43px;
  color: #777;
  overflow: hidden;
  label {
    gap: 7px;
    height: 24px;
  }
`
const FloorFoot = styled.div`
  display: flex;
  align-items: center;
  height: 40px;
  border: solid #c4c4c4;
  border-width: 1px 0;
  label {
    gap: 3px;
  }
`

/* windows that float over the workbench */
const floating = css`
  position: absolute;
  display: flex;
  flex-direction: column;
  background: #fff;
  border: 1px solid #b4b7ba;
  border-radius: 8px;
  overflow: hidden;
  box-shadow: 0 12px 56px rgba(0, 0, 0, 0.36);
`
const SectionFrame = styled.div`
  ${floating}
  left: 644px;
  top: 39px;
  width: 702px;
  height: 702px;
`
const SectionTitle = styled.div`
  display: flex;
  justify-content: space-between;
  height: 28px;
  padding: 0 11px 0 17px;
  font-size: 14px;
  line-height: 29px;
  border-bottom: 2px solid #c8cdd2;
`
const SectionTools = styled.div`
  display: flex;
  align-items: center;
  height: 33px;
  padding: 3px 0 0 2px;
  border-bottom: 1px solid #c8cdd2;
`
const FlatButton = styled.button`
  display: flex;
  align-items: center;
  gap: 3px;
  height: 22px;
  padding: 0 5px;
  margin-right: 3px;
  border: 1px solid ${(props) => (props.$boxed ? '#ececec' : 'transparent')};
  border-radius: 3px;
  ${(props) => props.$active && 'background: #c3d9f1;'}
`
const Rule = styled.i`
  width: 1px;
  height: 24px;
  margin: 0 5px 0 3px;
  background: #ddd;
`
const RadioPair = styled.div`
  display: flex;
  gap: 24px;
  padding-left: 3px;
  color: #000;
  label {
    display: flex;
    align-items: center;
    gap: 4px;
    padding-bottom: 4px;
  }
  input {
    width: 14px;
    height: 14px;
  }
`
const SectionCanvas = styled.div`
  position: relative;
  height: 609px;
  background: #000;
  font-family: 'Liberation Serif', 'Noto Sans CJK SC', serif;
`
const BarInfo = styled.div`
  position: absolute;
  left: 12px;
  top: 10px;
  display: flex;
  align-items: center;
  gap: 5px;
  color: #fff;
  font-family: 'Noto Sans', 'Noto Sans CJK SC', sans-serif;
`
const SectionStatus = styled.div`
  display: flex;
  align-items: center;
  flex: 1;
  padding-left: 2px;
  background: #fbfbfb;
  span {
    padding-left: 2px;
  }
`
const SnapButton = styled.button`
  display: flex;
  align-items: center;
  justify-content: center;
  width: 25px;
  height: 25px;
  border: 1px solid ${(props) => (props.$on ? '#3d85d8' : '#8a8a8a')};
  border-radius: 3px;
  background: ${(props) => (props.$on ? '#d5e5f9' : '#fff')};
`
const GripCorner = styled.i`
  align-self: flex-end;
  margin: 0 4px 4px auto;
`
const SettingsFrame = styled.div`
  ${floating}
  left: 1378px;
  top: 63px;
  width: 1105px;
  height: 731px;
`
const SettingsTitle = styled.div`
  display: flex;
  align-items: center;
  gap: 16px;
  height: 38px;
  padding: 0 11px 0 10px;
  font-size: 14px;
  span {
    flex: 1;
  }
`
const SettingsTabs = styled.div`
  display: flex;
  align-items: flex-end;
  gap: 3px;
  height: 26px;
  padding-left: 10px;
`
const SettingsTab = styled.button`
  width: 60px;
  height: 22px;
  background: #dcdcdc;
  color: #444;
  border-radius: 3px 3px 0 0;
  ${(props) =>
    props.$active &&
    css`
      position: relative;
      width: 62px;
      height: 26px;
      margin-bottom: -1px;
      color: ${BLUE};
      background: #fff;
      border: 1px solid #c3c5cb;
      border-bottom: 0;
    `}
`
const SettingsPane = styled.div`
  display: flex;
  gap: 6px;
  height: 621px;
  margin: 0 11px 0 10px;
  padding: 9px;
  border: 1px solid #c3c5cb;
`
const TypeBox = styled.div`
  position: relative;
  flex: none;
  width: 120px;
  height: 601px;
  padding: 1px;
  border: 1px solid #c6c6c6;
`
const TypeScroll = styled.div`
  height: 584px;
  overflow: hidden;
`
const TypeItem = styled.button`
  display: block;
  width: 105px;
  height: 28px;
  margin-bottom: 2px;
  padding: 2px 0 0 11px;
  text-align: left;
  ${(props) => props.$active && 'background: #c3d9f1;'}
`
const WideThumb = styled.i`
  position: absolute;
  left: 12px;
  bottom: 4px;
  width: 79px;
  height: 4px;
  border-radius: 2px;
  background: #e6e6e6;
`
const RuleColumn = styled.div`
  flex: 1;
  min-width: 0;
`
const RuleBox = styled.div`
  position: relative;
  height: 578px;
  padding-right: 12px;
  border: 1px solid #c0c0c0;
`
const RuleTable = styled.table`
  width: 100%;
  line-height: 18px;
  th,
  td {
    height: 21px;
    padding: 0;
    border-right: 1px solid #d0d0d0;
    border-bottom: 1px solid #d0d0d0;
  }
  th {
    font-weight: normal;
    background: #efefef;
    color: #333;
  }
  thead th:last-child {
    color: #fff;
    background: #80bafa;
    border: 1px solid #67a8ec;
  }
  td:nth-child(2) {
    padding-left: 8px;
    background: #fffde3;
  }
  td:nth-child(2).parent {
    padding-left: 2px;
  }
  td:nth-child(3) {
    padding-left: 2px;
  }
`
const RuleRow = styled.tr`
  ${(props) =>
    props.$current &&
    css`
      th {
        color: #fff;
        font-weight: bold;
        background: #80bafa;
      }
      td:nth-child(3) {
        padding: 0;
      }
    `}
`
const Branch = styled.i`
  display: inline-block;
  width: 17px;
  height: 20px;
  margin-right: 5px;
  vertical-align: top;
  background:
    linear-gradient(#e2e2e2, #e2e2e2) 0 0 / 1px ${(props) => (props.$last ? '10px' : '100%')} no-repeat,
    linear-gradient(#e2e2e2, #e2e2e2) 0 10px / 100% 1px no-repeat;
`
const Fold = styled.button`
  width: 13px;
  height: 13px;
  margin-right: 5px;
  line-height: 11px;
  border: 1px solid #888;
  border-radius: 2px;
  background: #fff;
`
const Editor = styled.div`
  display: flex;
  align-items: center;
  justify-content: space-between;
  height: 20px;
  padding: 0 10px 0 2px;
  line-height: 16px;
  background: #fff;
  border: 2px solid #6aa6e8;
  mark {
    color: #445;
    background: #9abcec;
  }
`
const Hint = styled.p`
  margin: 5px 0 0;
`
const SettingsFoot = styled.div`
  display: flex;
  align-items: flex-start;
  flex: 1;
  gap: 6px;
  padding: 6px 0 0 10px;
`

/* red review marks on top of everything */
const MarkBox = styled.div`
  position: absolute;
  left: ${(props) => props.$x}px;
  top: ${(props) => props.$y}px;
  width: ${(props) => props.$w}px;
  height: ${(props) => props.$h}px;
  border: 3px solid #fc2412;
  border-radius: 3px;
  pointer-events: none;
`
const MarkNote = styled.p`
  position: absolute;
  left: 1629px;
  top: 987px;
  margin: 0;
  color: #fb2b1c;
  font-size: 21px;
  line-height: 28px;
  white-space: pre;
  pointer-events: none;
`
